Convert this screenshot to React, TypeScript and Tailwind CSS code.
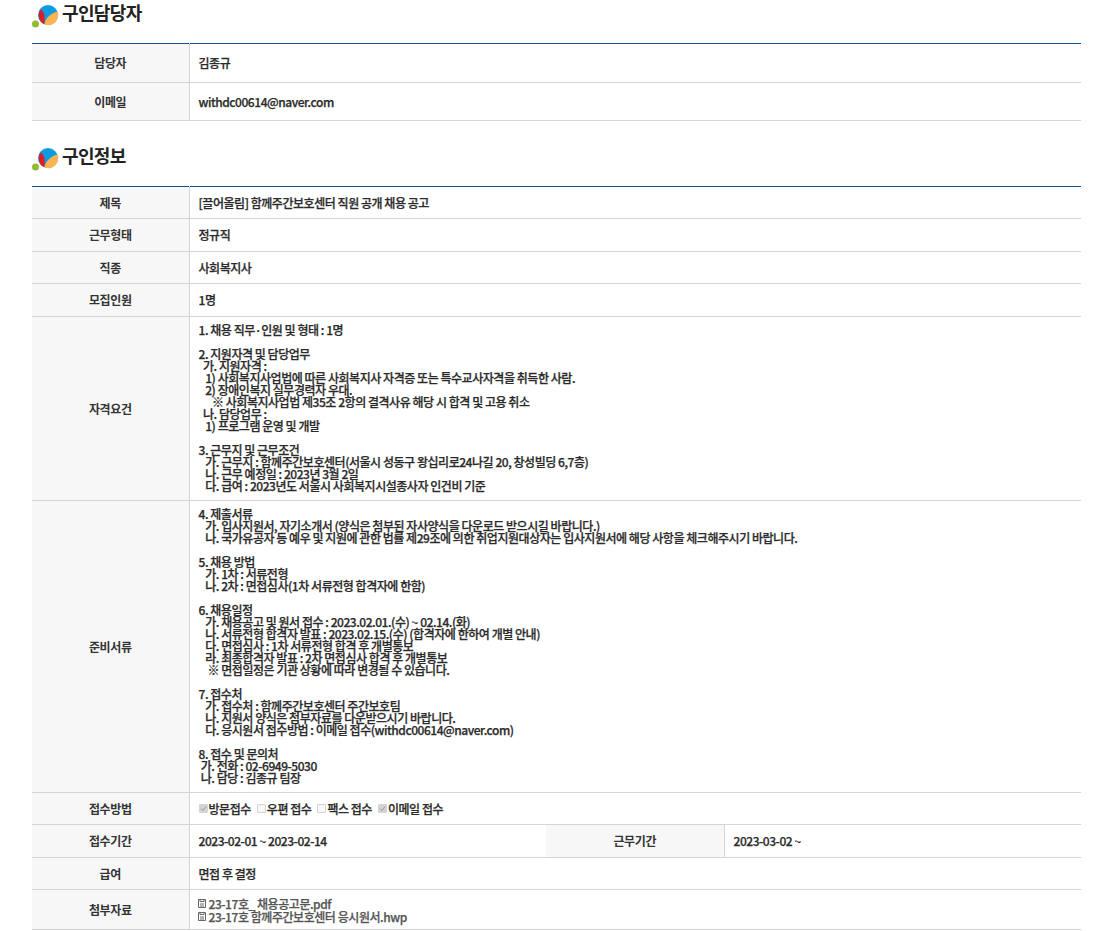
const font = "font-['Noto_Sans_CJK_KR','Liberation_Sans',sans-serif]"

const requirements = `1. 채용 직무·인원 및 형태 : 1명

2. 지원자격 및 담당업무
  가. 지원자격 :
   1) 사회복지사업법에 따른 사회복지사 자격증 또는 특수교사자격을 취득한 사람.
   2) 장애인복지 실무경력자 우대.
      ※ 사회복지사업법 제35조 2항의 결격사유 해당 시 합격 및 고용 취소
  나. 담당업무 :
   1) 프로그램 운영 및 개발

3. 근무지 및 근무조건
   가. 근무지 : 함께주간보호센터(서울시 성동구 왕십리로24나길 20, 창성빌딩 6,7층)
   나. 근무 예정일 : 2023년 3월 2일
   다. 급여 : 2023년도 서울시 사회복지시설종사자 인건비 기준`

const documents = `4. 제출서류
   가. 입사지원서, 자기소개서 (양식은 첨부된 자사양식을 다운로드 받으시길 바랍니다.)
   나. 국가유공자 등 예우 및 지원에 관한 법률 제29조에 의한 취업지원대상자는 입사지원서에 해당 사항을 체크해주시기 바랍니다.

5. 채용 방법
   가. 1차 : 서류전형
   나. 2차 : 면접심사(1차 서류전형 합격자에 한함)

6. 채용일정
   가. 채용공고 및 원서 접수 : 2023.02.01.(수) ~ 02.14.(화)
   나. 서류전형 합격자 발표 : 2023.02.15.(수) (합격자에 한하여 개별 안내)
   다. 면접심사 : 1차 서류전형 합격 후 개별통보
   라. 최종합격자 발표 : 2차 면접심사 합격 후 개별통보
    ※ 면접일정은 기관 상황에 따라 변경될 수 있습니다.

7. 접수처
   가. 접수처 : 함께주간보호센터 주간보호팀
   나. 지원서 양식은 첨부자료를 다운받으시기 바랍니다.
   다. 응시원서 접수방법 : 이메일 접수(withdc00614@naver.com)

8. 접수 및 문의처
 가. 전화 : 02-6949-5030
 나. 담당 : 김종규 팀장`

function Bullet() {
  return (
    <svg width="27" height="24" viewBox="0 0 27 24" className="mt-[5px] shrink-0">
      <circle cx="3.5" cy="19" r="3.5" fill="#8fbc33" />
      <circle cx="16" cy="10" r="10" fill="#0f9be0" />
      <path d="M25.5 6.5A10 10 0 0 1 12 19.2C14 13 19 8 25.5 6.5Z" fill="#fbb452" />
      <path d="M9 4.5C6 7 6 14 9.5 17.5C11 18.5 12 19 12.5 19C12.5 15 13 11 12 9C11.5 7 10 5 9 4.5Z" fill="#e01b24" />
    </svg>
  )
}

function Title({ children }: { children: string }) {
  return (
    <div className="flex h-[24px] items-start gap-[3px]">
      <Bullet />
      <h2 className="text-[18px] leading-[24px] font-bold tracking-[-0.65px] text-[#222]">{children}</h2>
    </div>
  )
}

function Head({ children }: { children: string }) {
  return (
    <th className="border-r border-b border-[#d5d5d5] bg-[#f7f7f7] p-0 text-center text-[12px] font-bold tracking-[-0.4px] text-[#333]">
      {children}
    </th>
  )
}

function Cell({ children, colSpan }: { children: React.ReactNode; colSpan?: number }) {
  return (
    <td colSpan={colSpan} className="border-b border-[#d5d5d5] pr-[8px] pl-[9px] py-0 text-left align-middle text-[12px] leading-[12px] font-medium tracking-[-0.46px] text-[#2a2a2a] [-webkit-text-stroke:0.25px_#2a2a2a]">
      {children}
    </td>
  )
}

function Check({ on, label }: { on?: boolean; label: string }) {
  return (
    <span className="inline-flex items-center gap-[1px]">
      <span className={`flex h-[9px] w-[9px] items-center justify-center rounded-[1px] border border-[#d4d4d4] ${on ? "bg-[#d4d4d4]" : "bg-[#f8f8f8]"}`}>
        {on && (
          <svg width="7" height="7" viewBox="0 0 7 7">
            <path d="M1 3.5L3 5.5L6 1.5" fill="none" stroke="#999" strokeWidth="1" />
          </svg>
        )}
      </span>
      {label}
    </span>
  )
}

function FileLine({ name }: { name: string }) {
  return (
    <div className="-ml-[1px] flex h-[13px] items-center gap-[3px] text-[12px] leading-[13px] tracking-[-0.45px] text-[#555] [-webkit-text-stroke:0.25px_#555]">
      <svg width="8" height="9" viewBox="0 0 8 9" className="shrink-0">
        <path d="M.5.5h7v8h-7zM2 .5v2h4v-2M2 5h4M2 7h4" fill="none" stroke="#666" strokeWidth="1" />
      </svg>
      <span>{name}</span>
    </div>
  )
}

export default function App() {
  return (
    <div className={`${font} w-[1115px] bg-white pr-[34px] pl-[32px]`}>
      <Title>구인담당자</Title>
      <table className="mt-[19px] w-full table-fixed border-collapse border-t border-[#1c4d8c]">
        <colgroup>
          <col className="w-[157px]" />
          <col />
        </colgroup>
        <tbody>
          <tr className="h-[39px]">
            <Head>담당자</Head>
            <Cell>김종규</Cell>
          </tr>
          <tr className="h-[38px]">
            <Head>이메일</Head>
            <Cell>withdc00614@naver.com</Cell>
          </tr>
        </tbody>
      </table>

      <div className="mt-[22px]">
        <Title>구인정보</Title>
      </div>
      <table className="mt-[19px] w-full table-fixed border-collapse border-t border-[#1c4d8c]">
        <colgroup>
          <col className="w-[157px]" />
          <col className="w-[357px]" />
          <col className="w-[178px]" />
          <col />
        </colgroup>
        <tbody>
          <tr className="h-[32px]">
            <Head>제목</Head>
            <Cell colSpan={3}>[끌어올림] 함께주간보호센터 직원 공개 채용 공고</Cell>
          </tr>
          <tr className="h-[33px]">
            <Head>근무형태</Head>
            <Cell colSpan={3}>정규직</Cell>
          </tr>
          <tr className="h-[32px]">
            <Head>직종</Head>
            <Cell colSpan={3}>사회복지사</Cell>
          </tr>
          <tr className="h-[33px]">
            <Head>모집인원</Head>
            <Cell colSpan={3}>1명</Cell>
          </tr>
          <tr className="h-[184px]">
            <Head>자격요건</Head>
            <Cell colSpan={3}>
              <div className="mb-[2px] whitespace-pre">{requirements}</div>
            </Cell>
          </tr>
          <tr className="h-[292px]">
            <Head>준비서류</Head>
            <Cell colSpan={3}>
              <div className="mb-[2px] whitespace-pre">{documents}</div>
            </Cell>
          </tr>
          <tr className="h-[32px]">
            <Head>접수방법</Head>
            <Cell colSpan={3}>
              <div className="flex items-center gap-[6px]">
                <Check on label="방문접수" />
                <Check label="우편 접수" />
                <Check label="팩스 접수" />
                <Check on label="이메일 접수" />
              </div>
            </Cell>
          </tr>
          <tr className="h-[33px]">
            <Head>접수기간</Head>
            <Cell>2023-02-01 ~ 2023-02-14</Cell>
            <Head>근무기간</Head>
            <Cell>2023-03-02 ~</Cell>
          </tr>
          <tr className="h-[32px]">
            <Head>급여</Head>
            <Cell colSpan={3}>면접 후 결정</Cell>
          </tr>
          <tr className="h-[40px]">
            <Head>첨부자료</Head>
            <Cell colSpan={3}>
              <FileLine name="23-17호_ 채용공고문.pdf" />
              <FileLine name="23-17호 함께주간보호센터 응시원서.hwp" />
            </Cell>
          </tr>
        </tbody>
      </table>
    </div>
  )
}
